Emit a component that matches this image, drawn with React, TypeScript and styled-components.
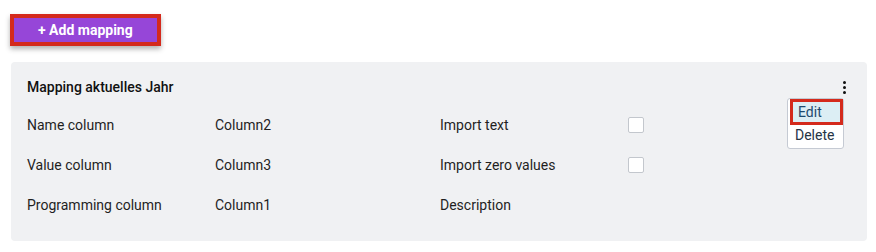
import { Fragment } from 'react'
import styled, { createGlobalStyle } from 'styled-components'

const Global = createGlobalStyle`
	body {
		margin: 0;
		background: #fff;
		font-family: Roboto, "Liberation Sans", Arial, sans-serif;
		color: #1f1f1f;
	}
`

const Page = styled.main`
	padding: 14px 9px 0 10px;
	display: flex;
	flex-direction: column;
	align-items: flex-start;
`

const AddButton = styled.button`
	height: 32px;
	padding: 0 24px;
	border: 4px solid #d42a1c;
	background: #9646d8;
	color: #fff;
	font-family: inherit;
	font-size: 14px;
	font-weight: 700;
	box-shadow: 0 3px 5px rgba(0, 0, 0, 0.3);
	cursor: pointer;
`

const Card = styled.section`
	position: relative;
	margin: 16px 0 0 1px;
	align-self: stretch;
	background: #f0f1f3;
	border-radius: 4px;
	padding: 16px;
`

const Title = styled.h3`
	margin: 0 0 9px;
	font-size: 14px;
	font-weight: 500;
	line-height: 18px;
	color: #111;
`

const Grid = styled.div`
	display: grid;
	grid-template-columns: 188px 225px 188px auto;
	grid-auto-rows: 40px;
	align-items: center;
	font-size: 14px;
`

const Cell = styled.span`
	color: #1f1f1f;
`

const Check = styled.span`
	width: 14px;
	height: 14px;
	border: 1px solid #c3c7cd;
	border-radius: 2px;
	background: #fff;
`

const Kebab = styled.button`
	position: absolute;
	top: 17px;
	right: 19px;
	width: 8px;
	height: 16px;
	padding: 0;
	border: 0;
	background: none;
	display: flex;
	flex-direction: column;
	align-items: center;
	justify-content: center;
	gap: 2px;
	cursor: pointer;
`

const Dot = styled.span`
	width: 3px;
	height: 3px;
	border-radius: 50%;
	background: #111;
`

const Menu = styled.ul`
	position: absolute;
	top: 36px;
	right: 23px;
	width: 55px;
	margin: 0;
	padding: 0;
	list-style: none;
	background: #fff;
	border: 1px solid #c5cad3;
	border-radius: 3px;
	font-size: 14px;
`

const MenuItem = styled.li<{ $active?: boolean }>`
	box-sizing: border-box;
	height: ${p => (p.$active ? '26px' : '23px')};
	padding-left: ${p => (p.$active ? '5px' : '7px')};
	line-height: ${p => (p.$active ? '20px' : '20px')};
	margin: ${p => (p.$active ? '0 0 0 2px' : '0')};
	border: ${p => (p.$active ? '3px solid #d42a1c' : '0')};
	background: ${p => (p.$active ? '#dceef4' : 'transparent')};
	color: ${p => (p.$active ? '#1c4a6e' : '#263445')};
	cursor: pointer;
`

const rows = [
	{ label: 'Name column', value: 'Column2', option: 'Import text', check: true },
	{ label: 'Value column', value: 'Column3', option: 'Import zero values', check: true },
	{ label: 'Programming column', value: 'Column1', option: 'Description', check: false },
]

const App = () => (
	<>
		<Global />
		<Page>
			<AddButton>+ Add mapping</AddButton>
			<Card>
				<Title>Mapping aktuelles Jahr</Title>
				<Grid>
					{rows.map(r => (
						<Fragment key={r.label}>
							<Cell>{r.label}</Cell>
							<Cell>{r.value}</Cell>
							<Cell>{r.option}</Cell>
							{r.check ? <Check /> : <span />}
						</Fragment>
					))}
				</Grid>
				<Kebab aria-label="More">
					<Dot />
					<Dot />
					<Dot />
				</Kebab>
				<Menu>
					<MenuItem $active>Edit</MenuItem>
					<MenuItem>Delete</MenuItem>
				</Menu>
			</Card>
		</Page>
	</>
)

export default App
